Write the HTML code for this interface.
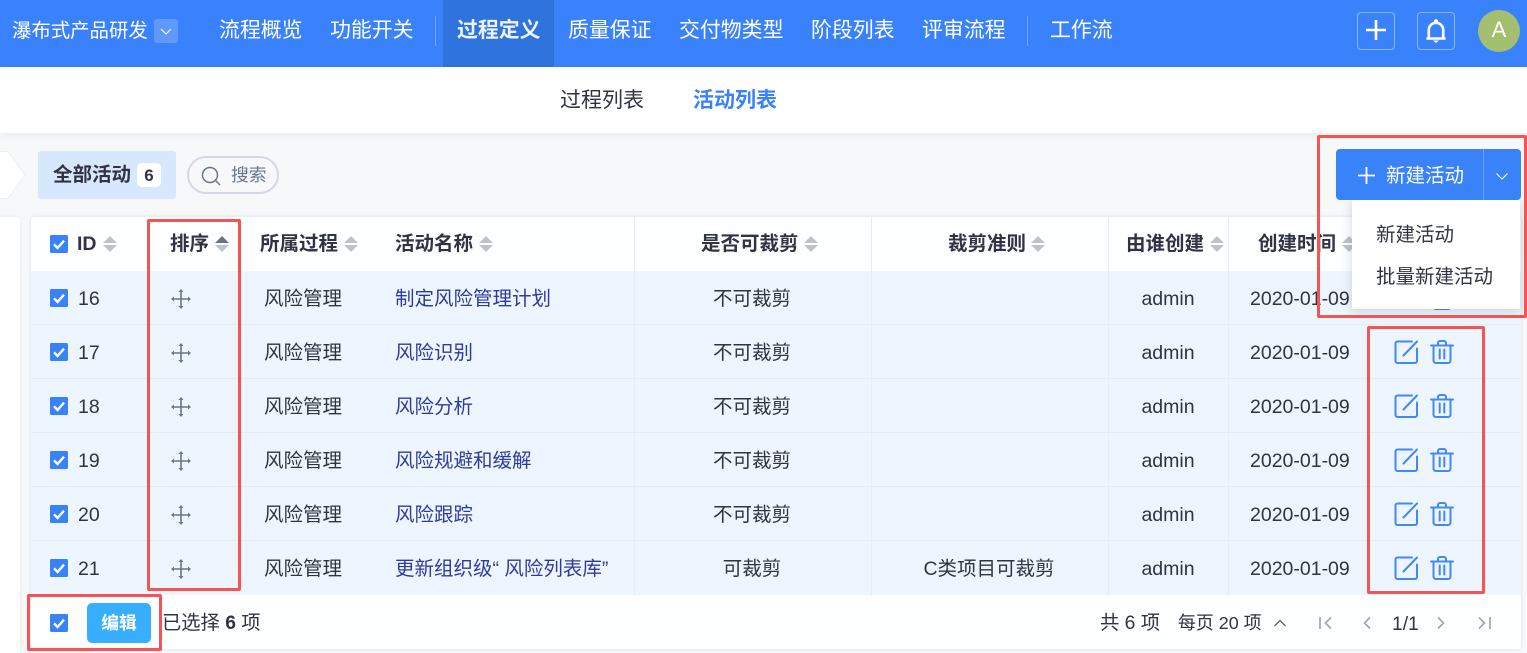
<!DOCTYPE html>
<html lang="zh-CN"><head><meta charset="utf-8"><title>活动列表</title>
<style>
html,body{margin:0;padding:0}
body{width:1527px;height:653px;overflow:hidden;position:relative;background:#f7f8fa;font-family:"Liberation Sans","Noto Sans CJK SC",sans-serif;color:#303344;font-size:19.5px}
.a{position:absolute}
.t{position:absolute;white-space:nowrap;line-height:28px;height:28px}
.c{transform:translateX(-50%)}
.n{color:#fff;font-size:20.9px;top:16px;line-height:30px;height:30px}
.h{font-weight:700;top:230px}
.b{color:#2f3b9c}
.row{position:absolute;left:31px;width:1490px;height:53px;background:#edf5fe;border-bottom:1px solid #e6ebf3}
.v{position:absolute;width:1px;background:#e9ecf2}
.red{position:absolute;border:3px solid #f75353;border-radius:2px;box-sizing:border-box;z-index:20}
.cb{position:absolute;left:50px;width:18px;height:18px;background:#3a82f8;border-radius:1.5px}
svg{position:absolute;overflow:visible}
.sort{position:absolute;width:14px;height:18px}
</style></head><body>
<svg width="0" height="0" style="position:absolute"><defs>
<symbol id="chk" viewBox="0 0 18 18"><path d="M4 9.4 7.6 13 14 5.6" fill="none" stroke="#fff" stroke-width="2.4"/></symbol>
<symbol id="srt" viewBox="0 0 14 18"><path d="M7 1 14 8H0Z" fill="#c0c2ca"/><path d="M7 17 14 10H0Z" fill="#c0c2ca"/></symbol>
<symbol id="mv" viewBox="0 0 20 20"><path d="M10 1V19M1 10H19" stroke="#68778b" stroke-width="1.6" fill="none"/><path d="M10 0 12.5 3H7.500ZM10 20 12.500 17H7.500ZM0 10 3 7.500V12.500ZM20 10 17 7.500V12.500Z" fill="#68778b"/></symbol>
<symbol id="ed" viewBox="0 0 24 24"><path d="M18 1.500H3.500a2 2 0 0 0-2 2V21a2 2 0 0 0 2 2H21a2 2 0 0 0 2-2V8.500M9.500 15.500 23 1.500" fill="none" stroke="#4388f8" stroke-width="2" stroke-linecap="round"/></symbol>
<symbol id="del" viewBox="0 0 24 24"><path d="M1 5.500H23M8 5.500V3a2 2 0 0 1 2-2h4a2 2 0 0 1 2 2V5.500M3.500 5.500V20.500a2.500 2.500 0 0 0 2.500 2.500h12a2.500 2.500 0 0 0 2.500-2.500V5.500M9.700 9.500V18.500M14.300 9.500V18.500" fill="none" stroke="#4388f8" stroke-width="2" stroke-linecap="round"/></symbol>
</defs></svg>

<!-- top bar -->
<div class="a" style="left:0;top:0;width:1527px;height:67px;background:#3a82fb"></div>
<div class="a" style="left:443px;top:0;width:111px;height:67px;background:#2f73dc"></div>
<div class="t" style="left:12px;top:16px;color:#fff;font-size:19.4px;line-height:30px;height:30px">瀑布式产品研发</div>
<div class="a" style="left:154px;top:19px;width:24px;height:24px;border-radius:3px;background:#6199fb"></div>
<svg style="left:160px;top:28px" width="12" height="7" viewBox="0 0 12 7"><path d="M1 1 6 6 11 1" fill="none" stroke="#fff" stroke-width="1.1"/></svg>
<div class="t n" style="left:219px">流程概览</div>
<div class="t n" style="left:330px">功能开关</div>
<div class="a" style="left:435px;top:16px;width:1px;height:30px;background:#76a7fb"></div>
<div class="t n" style="left:457px;font-weight:700;color:#eef3fb">过程定义</div>
<div class="t n" style="left:568px">质量保证</div>
<div class="t n" style="left:679px">交付物类型</div>
<div class="t n" style="left:811px">阶段列表</div>
<div class="t n" style="left:922px">评审流程</div>
<div class="a" style="left:1027px;top:16px;width:1px;height:30px;background:#76a7fb"></div>
<div class="t n" style="left:1050px">工作流</div>
<div class="a" style="left:1357px;top:12px;width:38px;height:38px;box-sizing:border-box;border:1.500px solid #8cb6fc;border-radius:4px"></div>
<svg style="left:1366px;top:20px" width="20" height="20" viewBox="0 0 20 20"><path d="M10 0V20M0 10H20" stroke="#fff" stroke-width="2.600"/></svg>
<div class="a" style="left:1417px;top:12px;width:38px;height:38px;box-sizing:border-box;border:1.500px solid #8cb6fc;border-radius:4px"></div>
<svg style="left:1426px;top:19px" width="20" height="24" viewBox="0 0 20 24"><path d="M2.800 19V11a7.200 7.200 0 0 1 14.400 0V19" fill="none" stroke="#fff" stroke-width="2.600"/><path d="M.5 19.500H19.500" stroke="#fff" stroke-width="2.400"/><circle cx="10" cy="2.200" r="2" fill="#fff"/><path d="M7 21.500H13L10 24Z" fill="#fff"/></svg>
<div class="a" style="left:1478px;top:10px;width:42px;height:42px;border-radius:50%;background:#a3bf6f;color:#fff;font-size:22px;line-height:40px;text-align:center">A</div>

<!-- sub nav -->
<div class="a" style="left:0;top:67px;width:1527px;height:66px;background:#fff;box-shadow:0 2px 8px rgba(40,50,80,.07)"></div>
<div class="t" style="left:560px;top:86px;font-size:21px;line-height:30px;height:30px">过程列表</div>
<div class="t" style="left:693px;top:86px;font-size:21px;line-height:30px;height:30px;font-weight:700;color:#3a82fb">活动列表</div>

<!-- toolbar -->
<svg style="left:0;top:151px" width="26" height="48" viewBox="0 0 26 48"><path d="M-3 .5H8L25 24 8 47.500H-3Z" fill="#fff" stroke="#eceef3"/></svg>
<div class="a" style="left:38px;top:151px;width:138px;height:48px;background:#d7e7fd;border-radius:3px"></div>
<div class="t" style="left:53px;top:161px;font-weight:700">全部活动</div>
<div class="a" style="left:137px;top:163px;width:24px;height:24px;background:#fff;border-radius:5px;text-align:center;line-height:25px;font-weight:700;font-size:17px">6</div>
<div class="a" style="left:187px;top:156px;width:92px;height:38px;box-sizing:border-box;border:2px solid #d6d6e6;border-radius:19px"></div>
<svg style="left:201px;top:166px" width="20" height="20" viewBox="0 0 20 20"><circle cx="9" cy="9" r="7.500" fill="none" stroke="#68778b" stroke-width="1.500"/><path d="M14.500 14.500 19 19" stroke="#68778b" stroke-width="1.500"/></svg>
<div class="t" style="left:231px;top:161px;font-size:17.800px;color:#68778b">搜索</div>

<!-- left panel -->
<div class="a" style="left:0;top:217px;width:20px;height:436px;background:#fff;border-radius:0 3px 0 0;box-shadow:0 0 3px rgba(40,50,80,.1)"></div>

<!-- table -->
<div class="a" style="left:31px;top:217px;width:1490px;height:432px;background:#fdfeff;border-radius:3px;box-shadow:0 0 3px rgba(40,50,80,.14)"></div>
<div class="row" style="top:271px"></div>
<div class="row" style="top:325px"></div>
<div class="row" style="top:379px"></div>
<div class="row" style="top:433px"></div>
<div class="row" style="top:487px"></div>
<div class="row" style="top:541px;height:54px;border:0"></div>
<div class="v" style="left:634px;top:217px;height:378px"></div>
<div class="v" style="left:871px;top:217px;height:378px"></div>
<div class="v" style="left:1108px;top:217px;height:378px"></div>
<div class="v" style="left:1228px;top:217px;height:378px"></div>

<!-- header -->
<div class="cb" style="top:235px"><svg width="18" height="18"><use href="#chk"/></svg></div>
<div class="t h" style="left:77px">ID</div>
<svg class="sort" style="left:103px;top:235px"><use href="#srt"/></svg>
<div class="t h" style="left:170px">排序</div>
<svg class="sort" style="left:215px;top:235px" viewBox="0 0 14 18"><path d="M7 1 14 8H0Z" fill="#6a7285"/><path d="M7 17 14 10H0Z" fill="#c0c2ca"/></svg>
<div class="t h" style="left:260px">所属过程</div>
<svg class="sort" style="left:344px;top:235px"><use href="#srt"/></svg>
<div class="t h" style="left:395px">活动名称</div>
<svg class="sort" style="left:479px;top:235px"><use href="#srt"/></svg>
<div class="t h" style="left:701px">是否可裁剪</div>
<svg class="sort" style="left:804px;top:235px"><use href="#srt"/></svg>
<div class="t h" style="left:948px">裁剪准则</div>
<svg class="sort" style="left:1031px;top:235px"><use href="#srt"/></svg>
<div class="t h" style="left:1126px">由谁创建</div>
<svg class="sort" style="left:1210px;top:235px"><use href="#srt"/></svg>
<div class="t h" style="left:1258px">创建时间</div>
<svg class="sort" style="left:1342px;top:235px"><use href="#srt"/></svg>

<!-- row 16 -->
<div class="cb" style="top:289px"><svg width="18" height="18"><use href="#chk"/></svg></div>
<div class="t" style="left:78px;top:285px">16</div>
<svg style="left:171px;top:289px" width="20" height="20"><use href="#mv"/></svg>
<div class="t" style="left:264px;top:285px">风险管理</div>
<div class="t b" style="left:395px;top:285px">制定风险管理计划</div>
<div class="t c" style="left:752px;top:285px">不可裁剪</div>
<div class="t c" style="left:1168px;top:285px">admin</div>
<div class="t" style="left:1250px;top:285px">2020-01-09</div>
<svg style="left:1430px;top:286px" width="24" height="24"><use href="#del"/></svg>

<!-- row 17 -->
<div class="cb" style="top:343px"><svg width="18" height="18"><use href="#chk"/></svg></div>
<div class="t" style="left:78px;top:339px">17</div>
<svg style="left:171px;top:343px" width="20" height="20"><use href="#mv"/></svg>
<div class="t" style="left:264px;top:339px">风险管理</div>
<div class="t b" style="left:395px;top:339px">风险识别</div>
<div class="t c" style="left:752px;top:339px">不可裁剪</div>
<div class="t c" style="left:1168px;top:339px">admin</div>
<div class="t" style="left:1250px;top:339px">2020-01-09</div>
<svg style="left:1394px;top:340px" width="24" height="24"><use href="#ed"/></svg>
<svg style="left:1430px;top:340px" width="24" height="24"><use href="#del"/></svg>

<!-- row 18 -->
<div class="cb" style="top:397px"><svg width="18" height="18"><use href="#chk"/></svg></div>
<div class="t" style="left:78px;top:393px">18</div>
<svg style="left:171px;top:397px" width="20" height="20"><use href="#mv"/></svg>
<div class="t" style="left:264px;top:393px">风险管理</div>
<div class="t b" style="left:395px;top:393px">风险分析</div>
<div class="t c" style="left:752px;top:393px">不可裁剪</div>
<div class="t c" style="left:1168px;top:393px">admin</div>
<div class="t" style="left:1250px;top:393px">2020-01-09</div>
<svg style="left:1394px;top:394px" width="24" height="24"><use href="#ed"/></svg>
<svg style="left:1430px;top:394px" width="24" height="24"><use href="#del"/></svg>

<!-- row 19 -->
<div class="cb" style="top:451px"><svg width="18" height="18"><use href="#chk"/></svg></div>
<div class="t" style="left:78px;top:447px">19</div>
<svg style="left:171px;top:451px" width="20" height="20"><use href="#mv"/></svg>
<div class="t" style="left:264px;top:447px">风险管理</div>
<div class="t b" style="left:395px;top:447px">风险规避和缓解</div>
<div class="t c" style="left:752px;top:447px">不可裁剪</div>
<div class="t c" style="left:1168px;top:447px">admin</div>
<div class="t" style="left:1250px;top:447px">2020-01-09</div>
<svg style="left:1394px;top:448px" width="24" height="24"><use href="#ed"/></svg>
<svg style="left:1430px;top:448px" width="24" height="24"><use href="#del"/></svg>

<!-- row 20 -->
<div class="cb" style="top:505px"><svg width="18" height="18"><use href="#chk"/></svg></div>
<div class="t" style="left:78px;top:501px">20</div>
<svg style="left:171px;top:505px" width="20" height="20"><use href="#mv"/></svg>
<div class="t" style="left:264px;top:501px">风险管理</div>
<div class="t b" style="left:395px;top:501px">风险跟踪</div>
<div class="t c" style="left:752px;top:501px">不可裁剪</div>
<div class="t c" style="left:1168px;top:501px">admin</div>
<div class="t" style="left:1250px;top:501px">2020-01-09</div>
<svg style="left:1394px;top:502px" width="24" height="24"><use href="#ed"/></svg>
<svg style="left:1430px;top:502px" width="24" height="24"><use href="#del"/></svg>

<!-- row 21 -->
<div class="cb" style="top:559px"><svg width="18" height="18"><use href="#chk"/></svg></div>
<div class="t" style="left:78px;top:555px">21</div>
<svg style="left:171px;top:559px" width="20" height="20"><use href="#mv"/></svg>
<div class="t" style="left:264px;top:555px">风险管理</div>
<div class="t b" style="left:395px;top:555px">更新组织级“ 风险列表库”</div>
<div class="t c" style="left:752px;top:555px">可裁剪</div>
<div class="t c" style="left:989px;top:555px">C类项目可裁剪</div>
<div class="t c" style="left:1168px;top:555px">admin</div>
<div class="t" style="left:1250px;top:555px">2020-01-09</div>
<svg style="left:1394px;top:556px" width="24" height="24"><use href="#ed"/></svg>
<svg style="left:1430px;top:556px" width="24" height="24"><use href="#del"/></svg>

<!-- footer -->
<div class="cb" style="top:614px"><svg width="18" height="18"><use href="#chk"/></svg></div>
<div class="a" style="left:87px;top:603px;width:64px;height:40px;background:#38aeff;border-radius:5px;color:#fff;text-align:center;line-height:40px;font-size:17.800px;font-weight:700">编辑</div>
<div class="t" style="left:162px;top:610px;font-size:19.3px">已选择 <b>6</b> 项</div>
<div class="t" style="left:1100px;top:610px;font-size:19.3px">共 6 项</div>
<div class="t" style="left:1178px;top:609px;font-size:17.900px">每页 20 项</div>
<svg style="left:1274px;top:619px" width="12" height="8" viewBox="0 0 12 8"><path d="M.5 7 6 1.500 11.500 7" fill="none" stroke="#555b6b" stroke-width="1.300"/></svg>
<svg style="left:1319px;top:617px" width="13" height="12" viewBox="0 0 13 12"><path d="M1 0V12M12 .5 6.500 6 12 11.500" fill="none" stroke="#a3a6ae" stroke-width="1.700"/></svg>
<svg style="left:1363px;top:617px" width="8" height="12" viewBox="0 0 8 12"><path d="M7 .5 1.500 6 7 11.500" fill="none" stroke="#a3a6ae" stroke-width="1.700"/></svg>
<div class="t" style="left:1392px;top:611px;font-size:19.250px">1/1</div>
<svg style="left:1437px;top:617px" width="8" height="12" viewBox="0 0 8 12"><path d="M1 .5 6.500 6 1 11.500" fill="none" stroke="#a3a6ae" stroke-width="1.700"/></svg>
<svg style="left:1478px;top:617px" width="13" height="12" viewBox="0 0 13 12"><path d="M12 0V12M1 .5 6.500 6 1 11.500" fill="none" stroke="#a3a6ae" stroke-width="1.700"/></svg>

<!-- new button + dropdown -->
<div class="a" style="left:1352px;top:200px;width:168px;height:109px;background:#fff;box-shadow:0 2px 10px rgba(30,40,70,.18);z-index:5"></div>
<div class="t" style="left:1376px;top:221px;z-index:6">新建活动</div>
<div class="t" style="left:1376px;top:263px;z-index:6">批量新建活动</div>
<div class="a" style="left:1336px;top:149px;width:185px;height:51px;background:#3a82f8;border-radius:4px;z-index:6"></div>
<div class="a" style="left:1483px;top:149px;width:1px;height:51px;background:#6ba1fa;z-index:7"></div>
<svg style="left:1358px;top:167px;z-index:7" width="17" height="17" viewBox="0 0 17 17"><path d="M8.500 0V17M0 8.500H17" stroke="#fff" stroke-width="1.800"/></svg>
<div class="t" style="left:1386px;top:162px;color:#fff;z-index:7">新建活动</div>
<svg style="left:1496px;top:173px;z-index:7" width="12" height="7" viewBox="0 0 12 7"><path d="M.5 .5 6 6 11.500 .5" fill="none" stroke="#fff" stroke-width="1.100"/></svg>

<!-- red annotation boxes -->
<div class="red" style="left:147px;top:219px;width:94px;height:372px"></div>
<div class="red" style="left:27px;top:594px;width:135px;height:57px"></div>
<div class="red" style="left:1317px;top:135px;width:210px;height:183px"></div>
<div class="red" style="left:1367px;top:326px;width:118px;height:268px"></div>
</body></html>
